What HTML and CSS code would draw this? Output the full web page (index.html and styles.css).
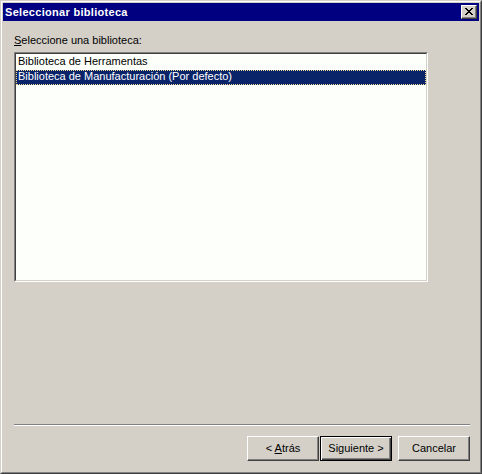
FILE: index.html
```html
<!DOCTYPE html>
<html lang="es">
<head>
<meta charset="utf-8">
<title>Seleccionar biblioteca</title>
<link rel="stylesheet" href="styles.css">
</head>
<body>
<div class="window">
  <div class="frame">
    <div class="titlebar">
      <span class="title">Seleccionar biblioteca</span>
      <div class="close">
        <svg width="8" height="7" viewBox="0 0 8 7" shape-rendering="crispEdges"><path fill="#000" d="M0 0h2v1h-2zM6 0h2v1h-2zM1 1h2v1h-2zM5 1h2v1h-2zM2 2h4v1h-4zM3 3h2v1h-2zM2 4h4v1h-4zM1 5h2v1h-2zM5 5h2v1h-2zM0 6h2v1h-2zM6 6h2v1h-2z"/></svg>
      </div>
    </div>
    <div class="content">
      <div class="label"><u>S</u>eleccione una biblioteca:</div>
      <div class="listbox">
        <div class="listinner">
          <div class="item">Biblioteca de Herramentas</div>
          <div class="item selected">Biblioteca de Manufacturación (Por defecto)</div>
        </div>
      </div>
      <div class="spacer"></div>
      <div class="separator"></div>
      <div class="buttons">
        <div class="btn back"><span>&lt; <u>A</u>trás</span></div>
        <div class="btn default"><span>Siguiente &gt;</span></div>
        <div class="btn cancel"><span>Cancelar</span></div>
      </div>
    </div>
  </div>
</div>
</body>
</html>
```
FILE: styles.css
```css
html, body {
  margin: 0;
  padding: 0;
}
body {
  background: #d4d0c8;
  font-family: "Liberation Sans", Arial, sans-serif;
  font-size: 11px;
  color: #000;
}
.window {
  width: 482px;
  height: 474px;
  box-sizing: border-box;
  border: 1px solid;
  border-color: #d4d0c8 #404040 #404040 #d4d0c8;
  background: #d4d0c8;
}
.frame {
  height: 100%;
  box-sizing: border-box;
  border: 1px solid;
  border-color: #ffffff #808080 #808080 #ffffff;
  padding: 1px;
  display: flex;
  flex-direction: column;
}
.titlebar {
  flex: none;
  height: 18px;
  background: #000080;
  display: flex;
  align-items: center;
  padding: 0 2px 0 2px;
}
.title {
  color: #fff;
  font-weight: bold;
  letter-spacing: 0.3px;
  line-height: 13px;
}
.close {
  margin-left: auto;
  width: 16px;
  height: 14px;
  box-sizing: border-box;
  background: #d4d0c8;
  border: 1px solid;
  border-color: #ffffff #404040 #404040 #ffffff;
  box-shadow: inset -1px -1px #808080;
  display: flex;
  align-items: center;
  justify-content: center;
  padding: 0 1px 1px 0;
}
.close svg {
  display: block;
}
.content {
  flex: 1;
  display: flex;
  flex-direction: column;
  padding: 13px 9px 10px 11px;
}
.label {
  line-height: 13px;
  height: 13px;
}
.listbox {
  margin-top: 5px;
  width: 414px;
  height: 230px;
  box-sizing: border-box;
  border: 1px solid;
  border-color: #808080 #ffffff #ffffff #808080;
}
.listinner {
  height: 100%;
  box-sizing: border-box;
  border: 1px solid;
  border-color: #404040 #d4d0c8 #d4d0c8 #404040;
  background: #fcfffa;
  padding-top: 1px;
}
.item {
  height: 15px;
  line-height: 13px;
  padding-left: 2px;
  white-space: nowrap;
}
.item.selected {
  background: #0a246a;
  color: #fff;
  outline: 1px dotted #f5db95;
  outline-offset: -1px;
}
.spacer {
  flex: 1;
}
.separator {
  height: 2px;
  box-sizing: border-box;
  border-top: 1px solid #808080;
  border-bottom: 1px solid #ffffff;
}
.buttons {
  margin-top: 10px;
  display: flex;
  justify-content: flex-end;
}
.btn {
  width: 72px;
  height: 25px;
  box-sizing: border-box;
  background: #d4d0c8;
  border: 1px solid;
  border-color: #ffffff #404040 #404040 #ffffff;
  box-shadow: inset -1px -1px #808080;
  display: flex;
  align-items: center;
  justify-content: center;
  line-height: 13px;
  white-space: pre;
}
.btn.back {
  margin-right: 1px;
}
.btn.default {
  border: 1px solid #000;
  box-shadow: inset 1px 1px #ffffff, inset -1px -1px #404040, inset -2px -2px #808080;
  margin-right: 6px;
}
```
